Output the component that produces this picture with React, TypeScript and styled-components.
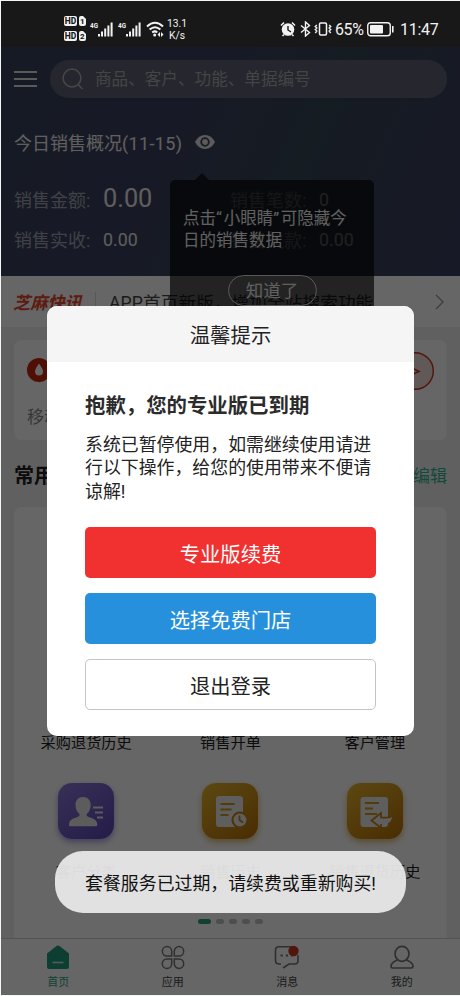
import React from "react";
import styled, { createGlobalStyle } from "styled-components";

const GlobalStyle = createGlobalStyle`
  * { box-sizing: border-box; }
  body {
    margin: 0;
    background: #f4f7f5;
    font-family: Roboto, "Noto Sans CJK SC", sans-serif;
    color: #222;
  }
  svg { display: block; flex: none; }
  button { font-family: inherit; padding: 0; }
  h2, h3, p { margin: 0; }
`;

const Screen = styled.div`
  position: relative;
  width: 459px;
  height: 994px;
  margin: 1px 0 1px 1px;
  overflow: hidden;
  display: flex;
  flex-direction: column;
  background: #f0f0f0;
`;

/* ---------- status bar ---------- */
const StatusBar = styled.div`
  height: 46px;
  flex: none;
  display: flex;
  justify-content: space-between;
  padding: 12px 22px 0 63px;
  background: #181818;
  color: #f2f2f2;
`;
const StatusGroup = styled.div`
  display: flex;
  align-items: center;
  height: 32px;
`;
const Gap = styled.span<{ $w: number }>`
  width: ${(p) => p.$w}px;
  flex: none;
`;
const NetSpeed = styled.div`
  width: 22px;
  margin: 2px 0 0 1px;
  font-size: 10.3px;
  line-height: 12px;
  text-align: center;
  white-space: nowrap;
`;
const StatusText = styled.span<{ $w: number; $ml: number; $ls?: number }>`
  width: ${(p) => p.$w}px;
  margin: 2px 0 0 ${(p) => p.$ml}px;
  font-size: 16px;
  line-height: 20px;
  letter-spacing: ${(p) => p.$ls ?? 0}px;
  white-space: nowrap;
`;

/* ---------- header ---------- */
const Header = styled.header`
  position: relative;
  flex: none;
  height: 229px;
  padding: 13px 13px 0 13px;
  background: linear-gradient(115deg, #38435c 0%, #3b4260 35%, #364656 62%, #3a425c 85%, #3b4260 100%);
`;
const SearchRow = styled.div`
  display: flex;
  align-items: center;
  gap: 12px;
`;
const SearchBox = styled.div`
  display: flex;
  align-items: center;
  flex: 1;
  height: 38px;
  padding-left: 12px;
  gap: 11px;
  border-radius: 19px;
  background: #5d6074;
  color: #aaaaac;
  font-size: 16.6px;
  line-height: 40px;
`;
const SearchHint = styled.span`
  padding-top: 2px;
`;
const Overview = styled.div`
  display: flex;
  align-items: center;
  margin-top: 31px;
  height: 26px;
  gap: 13px;
  font-size: 18px;
  color: #f0eeec;
`;
const DateRange = styled.span`
  letter-spacing: 0.35px;
`;
const Stats = styled.div`
  display: grid;
  grid-template-columns: 216px 1fr;
  grid-template-rows: 40px 40px;
  margin-top: 25px;
  align-items: center;
`;
const Stat = styled.div`
  display: flex;
  align-items: center;
  font-size: 18px;
  line-height: 30px;
  color: #a0a3b0;
`;
const StatName = styled.span`
  width: 89px;
  padding-top: 1px;
`;
const StatValue = styled.span<{ $big?: boolean }>`
  margin-top: ${(p) => (p.$big ? -2 : 0)}px;
  font-size: ${(p) => (p.$big ? 25.3 : 17.8)}px;
  color: #eeeae8;
`;

const Tip = styled.div`
  position: absolute;
  z-index: 2;
  left: 169px;
  top: 133px;
  width: 204px;
  height: 150px;
  padding: 27.5px 13px 0;
  border-radius: 5px;
  background: rgba(0, 0, 0, 0.65);
  color: #f2f2f2;
  font-size: 16.5px;
  line-height: 22.5px;
  white-space: nowrap;
  &::before {
    content: "";
    position: absolute;
    left: 25px;
    top: -7px;
    border: 7px solid transparent;
    border-top: 0;
    border-bottom-color: rgba(0, 0, 0, 0.65);
  }
`;
const Quote = styled.span`
  letter-spacing: 1.8px;
`;
const TipButton = styled.button`
  display: block;
  width: 89px;
  height: 31px;
  margin: 22px auto 0;
  border: 1px solid #dcdcdc;
  border-radius: 16px;
  background: none;
  color: #f0f0f0;
  font-size: 17.5px;
  line-height: 31px;
`;

/* ---------- content ---------- */
const News = styled.div`
  display: flex;
  align-items: center;
  height: 51px;
  flex: none;
  padding: 0 16px 0 12px;
  background: #fff;
  font-size: 17.6px;
  color: #444;
  white-space: nowrap;
`;
const NewsBrand = styled.span`
  width: 69px;
  font-size: 17.2px;
  font-weight: 700;
  font-style: italic;
  color: #e8442c;
`;
const Divider = styled.span`
  width: 1px;
  height: 20px;
  margin: 0 13px;
  background: #dcdcdc;
`;
const NewsText = styled.span`
  flex: 1;
  letter-spacing: 0.12px;
`;
const Card = styled.section`
  margin: 0 13px 0 13px;
  border-radius: 8px;
  background: #fff;
`;
const PromoCard = styled(Card)`
  flex: none;
  height: 100px;
  margin-top: 13px;
  padding: 12px 13px;
`;
const PromoTop = styled.div`
  display: flex;
  justify-content: space-between;
  height: 40px;
`;
const PromoIcon = styled.div`
  padding-top: 6px;
`;
const PromoText = styled.div`
  margin-top: 12px;
  font-size: 17px;
  line-height: 26px;
  color: #888;
`;
const SectionHead = styled.div`
  display: flex;
  flex: none;
  align-items: center;
  justify-content: space-between;
  height: 67px;
  padding: 2px 13px 0 13px;
  font-size: 20px;
  font-weight: 700;
`;
const EditLink = styled.span`
  font-size: 17px;
  font-weight: 400;
  color: #33b690;
`;
const FunctionCard = styled(Card)`
  flex: 1;
  border-radius: 8px 8px 0 0;
`;
const FunctionGrid = styled.div`
  display: grid;
  grid-template-columns: repeat(3, 1fr);
  grid-template-rows: 129px 129px 129px;
  padding-top: 18px;
`;
const FunctionItem = styled.div`
  display: flex;
  flex-direction: column;
  align-items: center;
  font-size: 15.2px;
  line-height: 22px;
  white-space: nowrap;
`;
const HiddenRow = styled.div`
  grid-column: 1 / -1;
`;
const LabelOnly = styled(FunctionItem)`
  padding-top: 78px;
`;
const Tile = styled.div<{ $kind: "violet" | "gold" }>`
  display: grid;
  place-items: center;
  width: 56px;
  height: 56px;
  margin-bottom: 22px;
  border-radius: 14px;
  background: ${(p) =>
    p.$kind === "violet"
      ? "linear-gradient(145deg, #8c78d8, #5a48b4)"
      : "linear-gradient(145deg, #e5b52e, #b87006)"};
  box-shadow: 0 3px 6px ${(p) => (p.$kind === "violet" ? "#a79fdc" : "#dcbd78")};
`;
const Pager = styled.div`
  display: flex;
  justify-content: center;
  gap: 5px;
  margin-top: 7px;
`;
const Dot = styled.i<{ $on?: boolean }>`
  width: ${(p) => (p.$on ? 12.5 : 8)}px;
  height: 5px;
  border-radius: 3px;
  background: ${(p) => (p.$on ? "#2fa283" : "#c2c2c2")};
`;
const TabBar = styled.nav`
  display: grid;
  grid-template-columns: repeat(4, 1fr);
  flex: none;
  height: 57px;
  padding: 6px 1px 0 0;
  border-top: 1px solid #cfcfcf;
  background: #fff;
`;
const Tab = styled.div<{ $on?: boolean }>`
  display: flex;
  flex-direction: column;
  align-items: center;
  gap: 5px;
  font-size: 11px;
  line-height: 16px;
  color: ${(p) => (p.$on ? "#2aa583" : "#444")};
`;

/* ---------- overlay ---------- */
const Mask = styled.div`
  position: absolute;
  z-index: 5;
  inset: 46px 0 0 0;
  padding: 259px 0 0 46px;
  background: rgba(0, 0, 0, 0.6);
`;
const Dialog = styled.div`
  width: 367px;
  height: 430px;
  border-radius: 10px;
  overflow: hidden;
  background: #fff;
`;
const DialogTitle = styled.h2`
  height: 56px;
  background: #f5f5f5;
  font-size: 20.4px;
  font-weight: 400;
  line-height: 60px;
  text-align: center;
`;
const DialogBody = styled.div`
  display: flex;
  flex-direction: column;
  padding: 29px 38px 0;
`;
const Warning = styled.h3`
  font-size: 20.4px;
  font-weight: 700;
  line-height: 30px;
  color: #2b2b2b;
  white-space: nowrap;
`;
const Message = styled.p`
  margin: 12px 0 23.8px;
  font-size: 17.9px;
  line-height: 23.4px;
  white-space: nowrap;
`;
const Action = styled.button<{ $kind: "red" | "blue" | "plain" }>`
  height: 51px;
  margin-bottom: 15px;
  border: ${(p) => (p.$kind === "plain" ? "1px solid #c4c4c4" : "0")};
  border-radius: 5px;
  background: ${(p) => ({ red: "#f13030", blue: "#2690dc", plain: "#fff" })[p.$kind]};
  color: ${(p) => (p.$kind === "plain" ? "#222" : "#fff")};
  font-size: 20.3px;
`;
const Toast = styled.div`
  position: absolute;
  z-index: 6;
  left: 54px;
  top: 850px;
  width: 351px;
  height: 62px;
  border-radius: 28px;
  background: rgba(233, 233, 233, 0.94);
  color: #111;
  font-size: 17.9px;
  line-height: 66px;
  text-align: center;
  white-space: nowrap;
`;

/* ---------- icons ---------- */
const HdBadges = () => (
  <svg width="22" height="26" viewBox="0 0 22 26">
    {[0, 15].map((y, i) => (
      <g key={y} transform={`translate(0 ${y})`}>
        <rect width="13" height="10" rx="2" fill="#f2f2f2" />
        <text x="6.5" y="8.2" textAnchor="middle" fontSize="8.5" fontWeight="800" fill="#181818">HD</text>
        <path d="M15 2q0-2 2-2h2l3 3v5q0 2-2 2h-3q-2 0-2-2z" fill="#f2f2f2" />
        <text x="18.4" y="8.4" textAnchor="middle" fontSize="8" fontWeight="800" fill="#181818">{i + 1}</text>
      </g>
    ))}
  </svg>
);
const SignalIcon = () => (
  <svg width="24" height="16" viewBox="0 0 24 16">
    <text x="0" y="7" fontSize="8" fontWeight="700" fill="#f2f2f2" textLength="8" lengthAdjust="spacingAndGlyphs">4G</text>
    <path d="M9 13v2.500M12 10.500v5M15.200 7.500v8M18.400 4.500v11M21.600 1.500v14" stroke="#f2f2f2" strokeWidth="2" />
  </svg>
);
const WifiIcon = () => (
  <svg width="18" height="16" viewBox="0 0 18 16">
    <g fill="none" stroke="#f2f2f2" strokeWidth="2">
      <path d="M1 5.500q8-7.600 16 0M3.600 8.600q5.400-4.800 10.800 0M6.200 11.500q2.800-2.200 5 0" />
    </g>
    <circle cx="8.700" cy="14" r="1.500" fill="#f2f2f2" />
    <path d="M14 11v5l-2.500-2.500zM15 11l2.500 2.500L15 16z" fill="#f2f2f2" />
  </svg>
);
const AlarmIcon = () => (
  <svg width="16" height="16" viewBox="0 0 16 16">
    <circle cx="8" cy="8.500" r="6.300" fill="#f2f2f2" />
    <path d="M1 4.500L4 1.500M15 4.500L12 1.500M4 13.500l-1.500 1.500M12 13.500l1.500 1.500" stroke="#f2f2f2" strokeWidth="1.600" />
    <path d="M8 5v4l3 2" stroke="#181818" strokeWidth="1.400" fill="none" />
  </svg>
);
const BluetoothIcon = () => (
  <svg width="11" height="16" viewBox="0 0 11 16">
    <path d="M1 4.500l8.500 7L5.500 15V1l4 3.500L1 11.500" fill="none" stroke="#f2f2f2" strokeWidth="1.400" />
  </svg>
);
const VibrateIcon = () => (
  <svg width="18" height="16" viewBox="0 0 18 16">
    <rect x="5.500" y="2" width="7" height="12" rx="1.200" fill="none" stroke="#f2f2f2" strokeWidth="1.500" />
    <path d="M2.800 4L1.300 5.500l1.500 1.500-1.500 1.500 1.500 1.500-1.500 2M15.200 4l1.500 1.500-1.500 1.500 1.500 1.500-1.500 1.500 1.500 2" fill="none" stroke="#f2f2f2" strokeWidth="1.400" />
  </svg>
);
const BatteryIcon = () => (
  <svg width="28" height="15" viewBox="0 0 28 15">
    <rect x=".75" y=".75" width="22.500" height="13" rx="2.800" fill="none" stroke="#f2f2f2" strokeWidth="1.400" />
    <rect x="3" y="3" width="13" height="8.500" rx="1" fill="#f2f2f2" />
    <path d="M25.800 4v6.500" stroke="#f2f2f2" strokeWidth="1.600" />
  </svg>
);
const MenuIcon = () => (
  <svg width="24" height="20" viewBox="0 0 24 20">
    <path d="M0 3h23M0 10h23M0 17h23" stroke="#e2e1e4" strokeWidth="2.200" />
  </svg>
);
const SearchIcon = () => (
  <svg width="22" height="22" viewBox="0 0 22 22" fill="none" stroke="#b4b4b2" strokeWidth="1.500">
    <circle cx="10" cy="10" r="8.900" />
    <path d="M16 16.500l4.500 4.500" />
  </svg>
);
const EyeIcon = () => (
  <svg width="20" height="14" viewBox="0 0 20 14">
    <path d="M0 7Q3.500 0 10 0t10 7q-3.500 7-10 7T0 7z" fill="#e6e2e0" />
    <circle cx="10" cy="7" r="3.800" fill="none" stroke="#3b4462" strokeWidth="1.800" />
  </svg>
);
const ArrowIcon = () => (
  <svg width="9" height="16" viewBox="0 0 9 16">
    <path d="M1 1l7 7-7 7" fill="none" stroke="#969696" strokeWidth="1.300" />
  </svg>
);
const DropIcon = () => (
  <svg width="46" height="26" viewBox="0 0 46 26">
    <path d="M12 5.500h30v12H22l-10 7z" fill="#d33a10" />
    <circle cx="12" cy="12" r="12" fill="#c8260c" />
    <path d="M12 5.500q-4 5.500-4 8a4 4 0 0 0 8 0q0-2.500-4-8z" fill="#fff" />
  </svg>
);
const GoIcon = () => (
  <svg width="38" height="38" viewBox="0 0 38 38">
    <circle cx="19" cy="19" r="18.300" fill="#f2dfd9" stroke="#c93218" strokeWidth="1.400" />
    <path d="M16 16l7 3.500-7 3" fill="none" stroke="#c93218" strokeWidth="1.500" />
  </svg>
);
const PersonTile = () => (
  <svg width="56" height="56" viewBox="0 0 56 56">
    <path d="M25 14c-4.600 0-7.500 3.500-7.500 8 0 4 1.500 7 4 9 .6 2-1 2.700-4 3.700-4 1.300-6.500 3-6.500 7 0 1 .7 1.500 1.700 1.500h25c1 0 1.600-.5 1.600-1.500 0-4-2.700-5.700-6.600-7-3-1-4.600-1.700-4-3.700 2.500-2 4-5 4-9 0-4.500-3-8-7.700-8z" fill="#e6e6e6" />
    <path d="M35 24.500h10M37 29.500h8M39 34.500h6" stroke="#e6e6e6" strokeWidth="2" />
  </svg>
);
const HistoryTile = () => (
  <svg width="56" height="56" viewBox="0 0 56 56">
    <rect x="14" y="13" width="27" height="31" rx="3" fill="#eaeaea" />
    <path d="M18.500 21h14M18.500 26.500h11M18.500 32h8" stroke="#cf9714" strokeWidth="2" />
    <circle cx="38" cy="37" r="7.500" fill="#eaeaea" stroke="#c4810e" strokeWidth="2" />
    <path d="M37.500 32.500V37l3.500 2.500" fill="none" stroke="#c4810e" strokeWidth="1.700" />
  </svg>
);
const ReturnTile = () => (
  <svg width="56" height="56" viewBox="0 0 56 56">
    <rect x="13.500" y="14" width="27.500" height="30" rx="3" fill="#eaeaea" />
    <path d="M18 20h14M18 25.500h8M18 31h12" stroke="#cf9714" strokeWidth="2" />
    <path d="M24.500 37.500l9.500-7.500v4.500q7 .8 11-.5c-.5 5.500-5 7.500-11 7v4z" fill="#eaeaea" />
    <path d="M44 34q-4 1-10 .5V30l-9.500 7.500L34 45v-4" fill="none" stroke="#c4810e" strokeWidth="1.700" />
  </svg>
);
const HomeIcon = () => (
  <svg width="24" height="25" viewBox="0 0 24 25">
    <path d="M1 8.500L10.500 1q1.500-1 3 0L23 8.500V22q0 2-2 2H3q-2 0-2-2z" fill="#1f9f7e" />
    <path d="M6.500 17.500h11" stroke="#cfe5df" strokeWidth="1.600" />
  </svg>
);
const AppsIcon = () => (
  <svg width="24" height="25" viewBox="0 0 24 25" fill="none" stroke="#777" strokeWidth="1.500">
    <path d="M10.700 11H6a4.700 4.700 0 1 1 4.700-4.700zM13.300 11H18a4.700 4.700 0 1 0-4.700-4.700zM10.700 14H6a4.700 4.700 0 1 0 4.700 4.700zM13.300 14H18a4.700 4.700 0 1 1-4.700 4.700z" />
  </svg>
);
const ChatIcon = () => (
  <svg width="26" height="25" viewBox="0 0 26 25">
    <path d="M18 1.800H5q-3.500 0-3.500 3.500v10Q1.500 19 5 19h2M24 10v5.500q0 3.500-3.500 3.500H15l-6 4" fill="none" stroke="#777" strokeWidth="1.600" />
    <path d="M6.500 10.500h2.300M11.800 10.500h2.300M17 10.500h2.300" stroke="#777" strokeWidth="2.200" />
    <circle cx="19.500" cy="6" r="5.200" fill="#c8371e" />
  </svg>
);
const MeIcon = () => (
  <svg width="24" height="25" viewBox="0 0 24 25" fill="none" stroke="#777" strokeWidth="1.700">
    <ellipse cx="12" cy="8.800" rx="7" ry="7.500" />
    <path d="M7.500 15C3.500 16.500 1 18.500 1 21.500q0 1.500 1.500 1.500h19q1.500 0 1.500-1.500c0-3-2.500-5-6.500-6.500" />
  </svg>
);

const firstRow = ["采购退货历史", "销售开单", "客户管理"];
const tabs = [
  { name: "首页", icon: <HomeIcon />, on: true },
  { name: "应用", icon: <AppsIcon /> },
  { name: "消息", icon: <ChatIcon /> },
  { name: "我的", icon: <MeIcon /> },
];

export default function App() {
  return (
    <>
      <GlobalStyle />
      <Screen>
        <StatusBar>
          <StatusGroup>
            <HdBadges />
            <Gap $w={4} />
            <SignalIcon />
            <Gap $w={4} />
            <SignalIcon />
            <Gap $w={4} />
            <WifiIcon />
            <Gap $w={1} />
            <NetSpeed>13.1<br />K/s</NetSpeed>
          </StatusGroup>
          <StatusGroup>
            <AlarmIcon />
            <Gap $w={4} />
            <BluetoothIcon />
            <Gap $w={3} />
            <VibrateIcon />
            <StatusText $w={29} $ml={3} $ls={-0.4}>65%</StatusText>
            <Gap $w={3} />
            <BatteryIcon />
            <StatusText $w={38} $ml={5} $ls={-0.3}>11:47</StatusText>
          </StatusGroup>
        </StatusBar>

        <Header>
          <SearchRow>
            <MenuIcon />
            <SearchBox>
              <SearchIcon />
              <SearchHint>商品、客户、功能、单据编号</SearchHint>
            </SearchBox>
          </SearchRow>
          <Overview>
            <span>今日销售概况<DateRange>(11-15)</DateRange></span>
            <EyeIcon />
          </Overview>
          <Stats>
            <Stat><StatName>销售金额:</StatName><StatValue $big>0.00</StatValue></Stat>
            <Stat><StatName>销售笔数:</StatName><StatValue>0</StatValue></Stat>
            <Stat><StatName>销售实收:</StatName><StatValue>0.00</StatValue></Stat>
            <Stat><StatName>销售欠款:</StatName><StatValue>0.00</StatValue></Stat>
          </Stats>
          <Tip>
            点击<Quote>“</Quote>小眼睛<Quote>”</Quote>可隐藏今<br />日的销售数据
            <TipButton>知道了</TipButton>
          </Tip>
        </Header>

        <News>
          <NewsBrand>芝麻快讯</NewsBrand>
          <Divider />
          <NewsText>APP首页新版，增加全站搜索功能</NewsText>
          <ArrowIcon />
        </News>

        <PromoCard>
          <PromoTop>
            <PromoIcon><DropIcon /></PromoIcon>
            <GoIcon />
          </PromoTop>
          <PromoText>移动支付</PromoText>
        </PromoCard>

        <SectionHead>
          常用功能
          <EditLink>编辑</EditLink>
        </SectionHead>

        <FunctionCard>
          <FunctionGrid>
            <HiddenRow />
            {firstRow.map((name) => (
              <LabelOnly key={name}>{name}</LabelOnly>
            ))}
            <FunctionItem><Tile $kind="violet"><PersonTile /></Tile>客户分类</FunctionItem>
            <FunctionItem><Tile $kind="gold"><HistoryTile /></Tile>销售历史</FunctionItem>
            <FunctionItem><Tile $kind="gold"><ReturnTile /></Tile>销售退货历史</FunctionItem>
          </FunctionGrid>
          <Pager>
            <Dot $on /><Dot /><Dot /><Dot /><Dot />
          </Pager>
        </FunctionCard>

        <TabBar>
          {tabs.map((t) => (
            <Tab key={t.name} $on={t.on}>{t.icon}{t.name}</Tab>
          ))}
        </TabBar>

        <Mask>
          <Dialog>
            <DialogTitle>温馨提示</DialogTitle>
            <DialogBody>
              <Warning>抱歉，您的专业版已到期</Warning>
              <Message>
                系统已暂停使用，如需继续使用请进<br />
                行以下操作，给您的使用带来不便请<br />
                谅解!
              </Message>
              <Action $kind="red">专业版续费</Action>
              <Action $kind="blue">选择免费门店</Action>
              <Action $kind="plain">退出登录</Action>
            </DialogBody>
          </Dialog>
        </Mask>
        <Toast>套餐服务已过期，请续费或重新购买!</Toast>
      </Screen>
    </>
  );
}
